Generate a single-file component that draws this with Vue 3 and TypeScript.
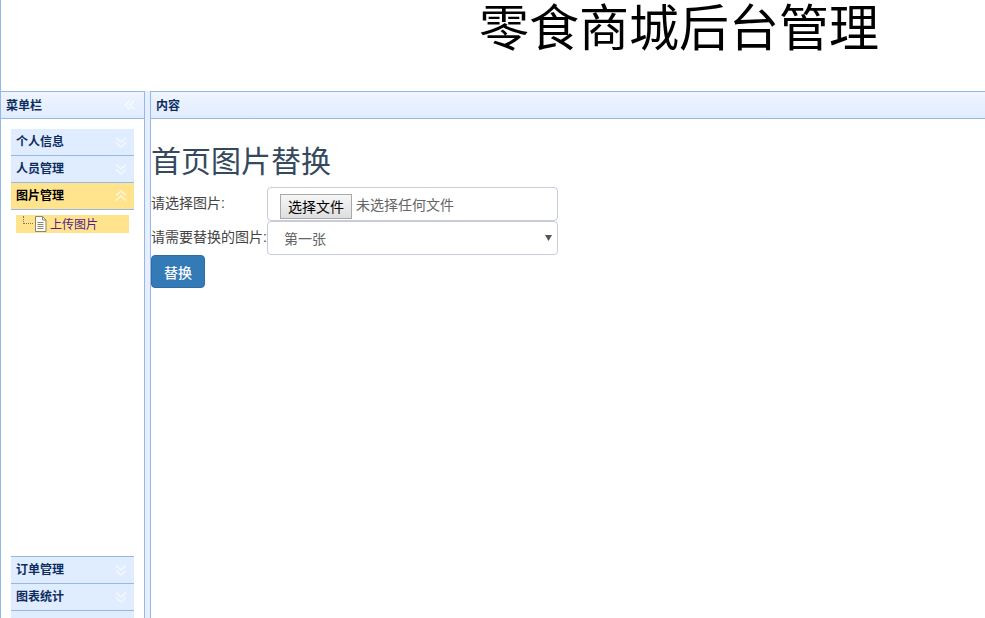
<script setup lang="ts">
interface Item { name: string; active?: boolean }
const top: Item[] = [{ name: '个人信息' }, { name: '人员管理' }, { name: '图片管理', active: true }]
const bottom: Item[] = [{ name: '订单管理' }, { name: '图表统计' }]
</script>

<template>
  <div class="page">
    <header class="banner"><h1>零食商城后台管理</h1></header>
    <div class="layout">
      <aside class="west">
        <div class="phead west-head">
          <span>菜单栏</span>
          <svg class="collapse" width="12" height="12" viewBox="0 0 12 12" fill="none" stroke="#fff" stroke-width="1.6">
            <path d="M6 1.500 1.500 6 6 10.500M10.500 1.500 6 6l4.500 4.500" />
          </svg>
        </div>
        <div class="accordion">
          <div class="group top">
            <template v-for="it in top" :key="it.name">
              <div class="ahead" :class="{ active: it.active }">
                <span>{{ it.name }}</span>
                <svg class="chev" width="14" height="14" viewBox="0 0 14 14" fill="none" stroke="#fff" stroke-width="1.6">
                  <path v-if="it.active" d="M2 6.500 7 2l5 4.500M2 11.500 7 7l5 4.500" />
                  <path v-else d="M2 2.500 7 7l5-4.500M2 7.500 7 12l5-4.500" />
                </svg>
              </div>
            </template>
            <div class="tree">
              <span class="dots"></span>
              <svg width="13" height="16" viewBox="0 0 13 16" fill="#fff" stroke="#8a8468">
                <path d="M1.500.500h7l3.500 3.500v11.500H1.500z" />
                <path d="M8.500.500v3.500H12M3.500 6.500h6M3.500 8.500h6M3.500 10.500h6M3.500 12.500h6" fill="none" />
              </svg>
              <a class="leaf">上传图片</a>
            </div>
          </div>
          <div class="group">
            <div v-for="it in bottom" :key="it.name" class="ahead">
              <span>{{ it.name }}</span>
              <svg class="chev" width="14" height="14" viewBox="0 0 14 14" fill="none" stroke="#fff" stroke-width="1.6">
                <path d="M2 2.500 7 7l5-4.500M2 7.500 7 12l5-4.500" />
              </svg>
            </div>
            <div class="ahead last"></div>
          </div>
        </div>
      </aside>
      <div class="split"></div>
      <main class="center">
        <div class="phead center-head"><span>内容</span></div>
        <div class="content">
          <h2>首页图片替换</h2>
          <form class="form" @submit.prevent>
            <div class="row">
              <label class="first">请选择图片:</label>
              <div class="control file">
                <button type="button" class="pick">选择文件</button>
                <span class="none">未选择任何文件</span>
              </div>
            </div>
            <div class="row">
              <label>请需要替换的图片:</label>
              <div class="control sel">
                <span>第一张</span>
                <svg class="arrow" width="7" height="6" viewBox="0 0 7 6"><path d="M0 0h7L3.500 6z" fill="#555" /></svg>
              </div>
            </div>
            <button class="submit" type="submit">替换</button>
          </form>
        </div>
      </main>
    </div>
  </div>
</template>

<style>
html, body { margin: 0; overflow: hidden; background: #fff; }
</style>

<style scoped>
.page {
  width: 985px;
  height: 618px;
  display: flex;
  flex-direction: column;
  font-family: "Liberation Sans", "Noto Sans CJK SC", sans-serif;
  box-sizing: border-box;
  border-left: 1px solid #95b8e7;
  overflow: hidden;
}
.banner { height: 91px; flex: none; }
.banner h1 {
  margin: 0;
  padding: 2px 0 0 478px;
  font-size: 50px;
  line-height: 55px;
  font-weight: 400;
  color: #000;
  white-space: nowrap;
}
.layout { flex: 1; display: flex; min-height: 0; }
.west {
  width: 143px;
  flex: none;
  display: flex;
  flex-direction: column;
  border-right: 1px solid #95b8e7;
}
.split { width: 5px; flex: none; background: #e6eeff; }
.center { flex: 1; min-width: 0; border-left: 1px solid #95b8e7; display: flex; flex-direction: column; }
.phead {
  height: 26px;
  flex: none;
  display: flex;
  align-items: center;
  justify-content: space-between;
  border-top: 1px solid #95b8e7;
  border-bottom: 1px solid #95b8e7;
  background: linear-gradient(#eff5ff, #e0ecff);
  font-size: 12px;
  font-weight: 700;
  color: #0e2d5f;
}
.phead span { padding-bottom: 2px; }
.collapse { opacity: 0.7; }
.west-head { padding: 0 8px 0 5px; }
.center-head { padding: 0 5px; }
.accordion {
  flex: 1;
  display: flex;
  flex-direction: column;
  justify-content: space-between;
  padding: 10px 10px 0;
  min-height: 0;
}
.ahead {
  height: 26px;
  display: flex;
  align-items: center;
  justify-content: space-between;
  padding: 0 6px 0 5px;
  background: #e0ecff;
  border-bottom: 1px solid #95b8e7;
  font-size: 12px;
  font-weight: 700;
  color: #0e2d5f;
}
.ahead span { padding-bottom: 4px; }
.chev { opacity: 0.7; }
.ahead.active { background: #ffe48d; color: #000; }
.ahead.last { height: 7px; border-bottom: 0; }
.group:last-child { border-top: 1px solid #95b8e7; }
.tree {
  margin: 5px 5px 0;
  height: 18px;
  background: #ffe48d;
  display: flex;
  align-items: center;
}
.dots {
  width: 10px;
  height: 8px;
  margin: -8px 1px 0 7px;
  border-left: 1px dotted #777;
  border-bottom: 1px dotted #777;
  box-sizing: border-box;
}
.leaf { margin-left: 3px; padding-bottom: 2px; font-size: 12px; color: #551a8b; }
.content { color: #333; }
h2 {
  margin: 21px 0 0;
  font-size: 30px;
  line-height: 43px;
  font-weight: 400;
  color: #34495e;
}
.form { display: flex; flex-direction: column; align-items: flex-start; margin-top: 4px; }
.row { display: flex; }
label { width: 116px; font-size: 14px; line-height: 33px; white-space: nowrap; color: #444; }
label.first { line-height: 32px; }
.control {
  width: 291px;
  height: 34px;
  box-sizing: border-box;
  border: 1px solid #c8cbdc;
  border-radius: 4px;
  background: #fff;
  font-size: 14px;
  color: #666;
  display: flex;
  align-items: center;
}
.file { padding: 6px 12px 0; align-items: flex-start; }
.pick {
  height: 25px;
  width: 72px;
  padding: 0 0 2px;
  border: 1px solid #a9a9a9;
  background: linear-gradient(#f6f6f6, #dedede);
  font: inherit;
  color: #000;
  flex: none;
}
.none { margin-left: 4px; line-height: 23px; }
.sel { padding-left: 16px; justify-content: space-between; padding-right: 5px; }
.submit {
  width: 54px;
  height: 33px;
  padding: 0;
  border: 1px solid #2e6da4;
  border-radius: 4px;
  background: #337ab7;
  color: #fff;
  font: inherit;
  font-size: 14px;
  font-weight: 500;
}
</style>
